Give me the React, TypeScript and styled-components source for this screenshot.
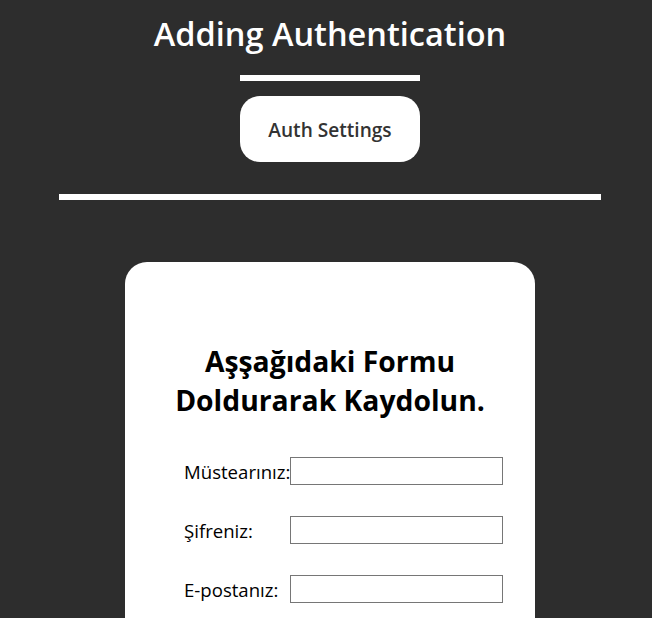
import React from "react";
import styled, { createGlobalStyle } from "styled-components";

const Global = createGlobalStyle`
  html, body {
    margin: 0;
    padding: 0;
    overflow: hidden;
    background: #2d2d2d;
  }
  body {
    font-family: "Open Sans", "Noto Sans", sans-serif;
  }
`;

const Page = styled.div`
  width: 644px;
  margin-left: 8px;
  display: flex;
  flex-direction: column;
  align-items: center;
  min-height: 618px;
`;

const Title = styled.h1`
  margin: 12px 0 0;
  font-size: 32.5px;
  line-height: 44px;
  font-weight: 600;
  color: #ffffff;
`;

const Bar = styled.div`
  width: 180px;
  height: 6px;
  background: #ffffff;
  margin-top: 19px;
`;

const SettingsButton = styled.button`
  width: 180px;
  height: 66px;
  margin-top: 15px;
  padding: 2px 0 0;
  border: none;
  border-radius: 20px;
  background: #ffffff;
  color: #333333;
  font-family: inherit;
  font-size: 19.1px;
  font-weight: 600;
  cursor: pointer;
`;

const Rule = styled.hr`
  width: 542px;
  height: 6px;
  margin: 32px 0 0;
  border: 3px solid #ffffff;
  box-sizing: border-box;
`;

const Card = styled.section`
  width: 410px;
  margin-top: 62px;
  padding: 80px 0 40px;
  box-sizing: border-box;
  background: #ffffff;
  border-radius: 22px;
`;

const Heading = styled.h2`
  margin: 0;
  text-align: center;
  font-size: 28.3px;
  line-height: 39px;
  font-weight: 700;
  color: #000000;
`;

const Form = styled.form`
  margin-top: 37px;
  padding-left: 59px;
  display: grid;
  grid-template-columns: 106px 213px;
  row-gap: 31px;
  align-items: center;
`;

const Label = styled.label`
  font-size: 18.6px;
  color: #000000;
  white-space: nowrap;
`;

const Input = styled.input`
  width: 213px;
  height: 28px;
  box-sizing: border-box;
  border: 1px solid #767676;
  border-radius: 0;
  padding: 2px 4px;
  font-family: inherit;
  font-size: 14px;
  background: #ffffff;
  outline: none;
`;

const fields = [
  { id: "nick", label: "Müstearınız:", type: "text" },
  { id: "pass", label: "Şifreniz:", type: "password" },
  { id: "mail", label: "E-postanız:", type: "email" },
];

export default function App() {
  return (
    <>
      <Global />
      <Page>
        <Title>Adding Authentication</Title>
        <Bar />
        <SettingsButton type="button">Auth Settings</SettingsButton>
        <Rule />
        <Card>
          <Heading>
            Aşşağıdaki Formu
            <br />
            Doldurarak Kaydolun.
          </Heading>
          <Form onSubmit={(e) => e.preventDefault()}>
            {fields.map((f) => (
              <React.Fragment key={f.id}>
                <Label htmlFor={f.id}>{f.label}</Label>
                <Input id={f.id} type={f.type} />
              </React.Fragment>
            ))}
          </Form>
        </Card>
      </Page>
    </>
  );
}
